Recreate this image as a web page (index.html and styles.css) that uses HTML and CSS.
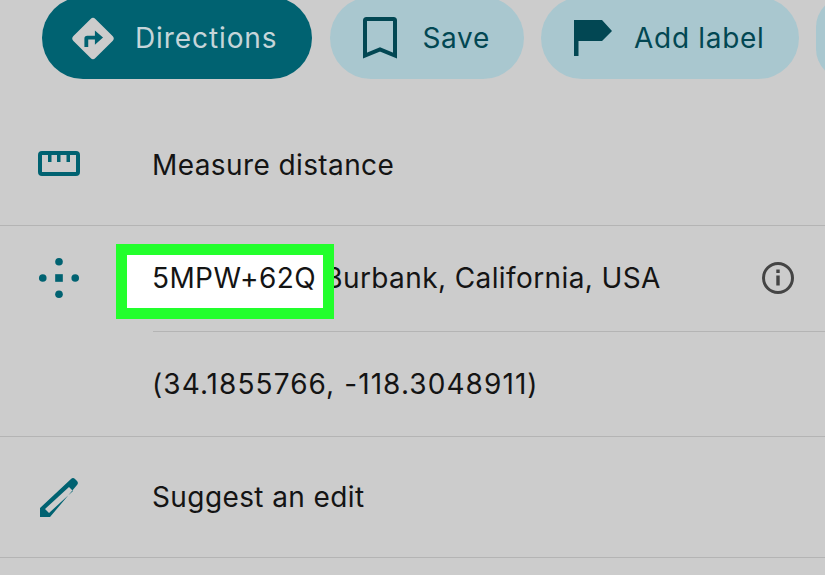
FILE: index.html
```html
<!DOCTYPE html>
<html lang="en">
<head>
<meta charset="utf-8">
<title>Place details</title>
<link rel="stylesheet" href="styles.css">
</head>
<body>
<div class="actions">
  <div class="pill pill-primary">
    <svg class="icon-directions" viewBox="0 0 44 44"><path fill="#cccccc" d="M19.500 1.500a3.500 3.500 0 0 1 5 0l18 18a3.500 3.500 0 0 1 0 5l-18 18a3.500 3.500 0 0 1-5 0l-18-18a3.500 3.500 0 0 1 0-5z"/><path fill="#006271" d="M13 31v-9a3 3 0 0 1 3-3h8v-5.500l8.500 7.500-8.500 7.500V23h-7v8z"/></svg>
    <span>Directions</span>
  </div>
  <div class="pill pill-save">
    <svg class="icon-save" viewBox="0 0 34 42"><path fill="none" stroke="#024753" stroke-width="4" d="M2 38.500V3.500A1.500 1.500 0 0 1 3.500 2h27A1.500 1.500 0 0 1 32 3.500v35L17 32.500z"/></svg>
    <span>Save</span>
  </div>
  <div class="pill pill-add">
    <svg class="icon-flag" viewBox="0 0 38 36"><path fill="#024753" d="M0 0h28l10 11-10 10H4.500v15H0z"/></svg>
    <span>Add label</span>
  </div>
  <div class="pill pill-more"></div>
</div>
<div class="row row-measure">
  <svg class="row-icon icon-ruler" viewBox="0 0 42 25"><rect x="2" y="2" width="38" height="21" rx="2" fill="none" stroke="#006271" stroke-width="4"/><path fill="#006271" d="M10 3h3.500v8H10zM19 3h3.500v8H19zM28.500 3H32v8h-3.500z"/></svg>
  <div class="row-text">Measure distance</div>
</div>
<div class="code-block">
  <div class="row row-code">
    <svg class="row-icon icon-code" viewBox="0 0 44 44"><g fill="#006271"><circle cx="22" cy="5" r="4"/><circle cx="5" cy="22" r="4"/><circle cx="39" cy="22" r="4"/><circle cx="22" cy="39" r="4"/><rect x="18" y="18" width="8" height="8"/></g></svg>
    <div class="row-text row-text-line"><span class="code">5MPW+62Q</span> Burbank, California, USA</div>
    <svg class="info" viewBox="0 0 34 34"><circle cx="17" cy="17" r="14.500" fill="none" stroke="#444" stroke-width="3"/><path fill="#444" d="M15.300 8.500h3.400v3.400h-3.400zM15.300 14.500h3.400v10h-3.400z"/></svg>
    <div class="highlight"></div>
  </div>
  <div class="row row-coords"><div class="row-text row-text-top">(34.1855766, -118.3048911)</div></div>
</div>
<div class="row row-edit">
  <svg class="row-icon icon-pencil" viewBox="0 0 38 39"><path fill="#006271" fill-rule="evenodd" d="M31 1a3 3 0 0 1 4 0l2 2a3 3 0 0 1 0 4L10 39H0v-9zM29 9 5 31l4 4 24-22z"/></svg>
  <div class="row-text">Suggest an edit</div>
</div>
</body>
</html>
```
FILE: styles.css
```css
* { box-sizing: border-box; }
html, body { margin: 0; height: 100%; }
body {
  width: 825px;
  height: 575px;
  overflow: hidden;
  background: #cccccc;
  font-family: Inter, "Liberation Sans", sans-serif;
  color: #141414;
}
.actions {
  display: flex;
  align-items: flex-end;
  gap: 17px;
  height: 79px;
  padding-left: 42px;
  width: 825px;
  overflow: hidden;
}
.pill {
  display: flex;
  flex: none;
  align-items: center;
  gap: 22px;
  height: 82px;
  padding: 0 34px 0 30px;
  border-radius: 41px;
  background: #a9c7cf;
  color: #024753;
  font-size: 28px;
  letter-spacing: 0.7px;
}
.pill-primary {
  background: #006271;
  color: #c6d5d9;
  letter-spacing: 0.9px;
  gap: 21px;
  padding-right: 35px;
  margin-right: 1px;
}
.pill-save { padding-left: 33px; gap: 25px; }
.pill-add { padding-left: 33px; gap: 22px; }
.pill-more { width: 60px; padding: 0; }
.icon-directions { width: 42px; height: 43px; flex: none; }
.icon-save { width: 34px; height: 42px; flex: none; }
.icon-flag { width: 38px; height: 36px; flex: none; }
.row {
  position: relative;
  display: flex;
  align-items: center;
  border-bottom: 1px solid #b4b4b4;
}
.row-icon { width: 42px; height: 44px; margin-left: 38px; flex: none; }
.icon-pencil { width: 38px; height: 39px; margin-left: 40px; margin-right: 2px; }
.icon-ruler { height: 25px; margin-top: -2px; }
.row-text {
  margin-left: 72px;
  font-size: 28px;
  line-height: 34px;
  letter-spacing: 0.4px;
}
.row-measure { height: 147px; padding-top: 25px; }
.row-code { height: 105px; border-bottom: 0; padding-bottom: 2px; }
.row-text-line { flex: 1; }
.code { position: relative; z-index: 2; }
.row-coords {
  height: 105px;
  border-bottom: 0;
  border-top: 1px solid #b4b4b4;
  margin-left: 153px;
}
.row-text-top { margin-left: -1px; letter-spacing: 1.08px; }
.code-block { border-bottom: 1px solid #b4b4b4; }
.row-edit { height: 121px; }
.info { width: 34px; height: 34px; margin-right: 30px; flex: none; }
.highlight {
  position: absolute;
  left: 116px;
  top: 18px;
  width: 218px;
  height: 75px;
  background: #ffffff;
  border: 11px solid #22ff2c;
  z-index: 1;
}
```
